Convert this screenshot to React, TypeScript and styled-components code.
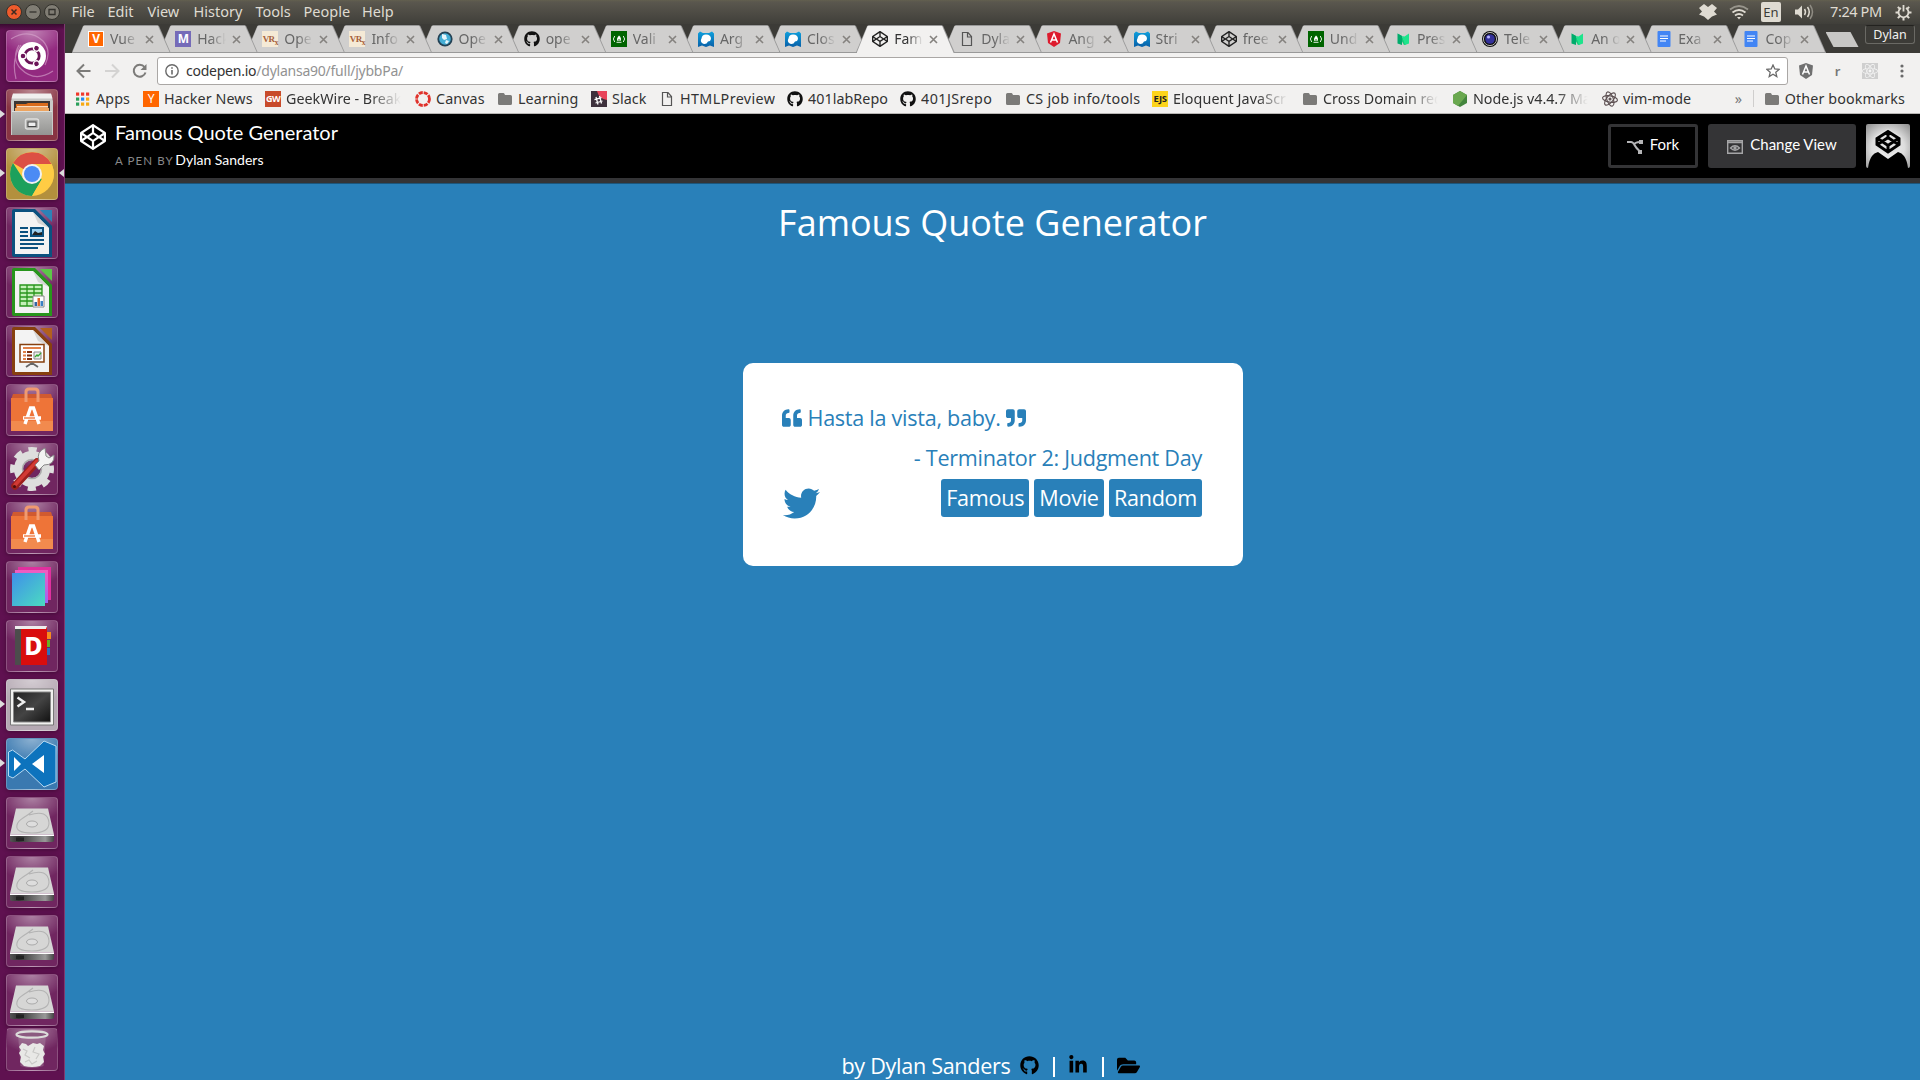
import React from "react";
import styled, { createGlobalStyle } from "styled-components";
import {
  FaCodepen, FaFolderOpen, FaGithub, FaLinkedinIn, FaQuoteLeft, FaQuoteRight, FaReact, FaTwitter,
} from "react-icons/fa";

const GlobalStyle = createGlobalStyle`
  * { box-sizing: border-box; }
  body { margin: 0; overflow: hidden; }
  svg { display: block; flex: none; }
`;

const ui = `"Noto Sans", "Open Sans", sans-serif`;
const blue = "#2980b9";

const Screen = styled.div`
  width: 1920px;
  height: 1080px;
  display: flex;
  flex-direction: column;
  overflow: hidden;
  font-family: ${ui};
`;

/* ---------- desktop panel ---------- */
const Panel = styled.header`
  height: 24px;
  flex: none;
  display: flex;
  align-items: center;
  background: linear-gradient(#63604f 0, #5a574e 2px, #403f3a 100%);
  color: #dfdbd2;
  font-size: 14.5px;
  line-height: 22px;
`;
const WindowButtons = styled.div`
  display: flex;
  gap: 3px;
  width: 71.5px;
  padding: 0 0 1px 6px;
`;
const MenuItem = styled.span<{ $w: number }>`
  width: ${(p) => p.$w}px;
  margin-top: -2px;
  white-space: nowrap;
`;
const Tray = styled.div`
  margin-left: auto;
  display: flex;
  align-items: center;
  padding-right: 8px;
`;
const WifiIcon = styled.svg`
  margin-left: 12px;
`;
const Language = styled.span`
  width: 20px;
  height: 20px;
  margin: 0 13px 0 12px;
  border-radius: 2px;
  background: #dfdbd2;
  color: #3c3b37;
  font-size: 13px;
  line-height: 20px;
  text-align: center;
`;
const Clock = styled.span`
  width: 54px;
  margin: -2px 11px 0 16px;
  white-space: nowrap;
  letter-spacing: -0.4px;
`;

const Workspace = styled.div`
  flex: 1;
  display: flex;
  min-height: 0;
`;

/* ---------- launcher ---------- */
const Launcher = styled.nav`
  width: 65px;
  flex: none;
  padding: 6px 0 0 6px;
  display: flex;
  flex-direction: column;
  gap: 7px;
  background: linear-gradient(#390a30 0, #5f1150 6px, #5f1150 100%);
  border-right: 1px solid #7e3a70;
`;
const Tile = styled.div<{ $bg?: string; $short?: boolean }>`
  position: relative;
  flex: none;
  width: 52px;
  height: ${(p) => (p.$short ? 43 : 52)}px;
  margin-top: ${(p) => (p.$short ? -5 : 0)}px;
  border-radius: 4px;
  border: 1px solid rgba(255, 255, 255, 0.2);
  background: radial-gradient(ellipse 34px 24px at 50% 0, rgba(255, 255, 255, 0.42), rgba(255, 255, 255, 0) 100%),
    ${(p) => p.$bg ?? "#702660"};
  box-shadow: 0 1px 4px rgba(30, 0, 25, 0.45);
  display: flex;
  align-items: center;
  justify-content: center;
  ${(p) => p.$short && "clip-path: polygon(2% 0, 98% 0, 102% 100%, -2% 100%);"}
`;
const Pip = styled.i<{ $right?: boolean }>`
  position: absolute;
  top: 20px;
  ${(p) => (p.$right ? "right: -7px; border-right: 5px solid #ddd;" : "left: -7px; border-left: 5px solid #ddd;")}
  border-top: 4.5px solid transparent;
  border-bottom: 4.5px solid transparent;
`;

/* ---------- browser ---------- */
const Browser = styled.main`
  flex: 1;
  min-width: 0;
  display: flex;
  flex-direction: column;
`;
const TabStrip = styled.div`
  height: 29px;
  flex: none;
  display: flex;
  align-items: flex-start;
  padding: 1px 0 0 6.5px;
  background: #3c3b37;
`;
const TabBox = styled.div<{ $active?: boolean; $z: number }>`
  position: relative;
  z-index: ${(p) => (p.$active ? 50 : p.$z)};
  isolation: isolate;
  width: 99.3px;
  height: 28px;
  flex: none;
  margin-right: -12.18px;
  padding-left: 16.5px;
  display: flex;
  align-items: center;
  &::before,
  &::after {
    content: "";
    position: absolute;
    inset: 0;
    z-index: -2;
    background: #999;
    clip-path: polygon(0 100%, 11.5px 1px, 13px 0, 86px 0, 87.5px 1px, 100% 100%);
  }
  &::after {
    z-index: -1;
    inset: 1px 1.3px ${(p) => (p.$active ? 0 : 1)}px 1px;
    background: ${(p) => (p.$active ? "#f2f1f0" : "#d0cfce")};
    clip-path: polygon(0 100%, 11px 0, 85.5px 0, 100% 100%);
  }
`;
const TabTitle = styled.span<{ $active?: boolean }>`
  width: 29px;
  margin-left: 6px;
  overflow: hidden;
  white-space: nowrap;
  font-size: 14px;
  line-height: 20px;
  margin-top: -1px;
  color: ${(p) => (p.$active ? "#333" : "#666")};
  mask-image: linear-gradient(90deg, #000 45%, transparent 100%);
`;
const TabClose = styled.svg`
  margin-left: 6px;
  stroke: #85827f;
  stroke-width: 1.6;
`;
const NewTab = styled.i`
  width: 33px;
  height: 15px;
  margin: 7px 0 0 11.5px;
  background: #c8c7c5;
  clip-path: polygon(0 0, 25px 0, 33px 100%, 8px 100%);
`;
const Profile = styled.span`
  width: 50px;
  height: 19px;
  margin: 0 5px 0 auto;
  border: 1px solid #6a6964;
  border-top-color: #23221f;
  border-radius: 3px;
  background: #3c3b37;
  color: #f2f1f0;
  font-size: 12.5px;
  line-height: 17px;
  text-align: center;
`;
const Toolbar = styled.div`
  height: 34px;
  flex: none;
  display: flex;
  align-items: center;
  padding: 2px 0 0 10.5px;
  background: #f2f1f0;
`;
const NavIcon = styled.svg<{ $dim?: boolean; $gap?: number }>`
  margin-right: ${(p) => p.$gap ?? 12}px;
  fill: none;
  stroke: ${(p) => (p.$dim ? "#d4d3d2" : "#7c7b79")};
  stroke-width: 2;
`;
const Omnibox = styled.div`
  flex: none;
  width: 1631px;
  height: 28px;
  margin-right: 10px;
  padding: 0 7px;
  display: flex;
  align-items: center;
  border: 1px solid #aaa7a5;
  border-radius: 3px;
  background: #fff;
  color: #333;
  font-size: 14px;
  span { color: #929292; }
`;
const Url = styled.div`
  flex: 1;
  margin: -1px 0 0 7.5px;
  letter-spacing: -0.24px;
`;
const ExtensionIcon = styled.div<{ $w: number; $pad?: number }>`
  flex: none;
  width: ${(p) => p.$w}px;
  padding-left: ${(p) => p.$pad ?? 0}px;
  display: flex;
  justify-content: center;
  color: #777;
  font: 600 13px ${ui};
`;
const Bookmarks = styled.div`
  height: 27px;
  flex: none;
  display: flex;
  align-items: center;
  padding: 0 15px 3px 10px;
  background: #f2f1f0;
  border-bottom: 1px solid #b8b6b4;
  color: #333;
  font-size: 14.3px;
  line-height: 20px;
`;
const Bookmark = styled.span<{ $w?: number }>`
  flex: none;
  width: ${(p) => (p.$w ? p.$w + "px" : "auto")};
  display: flex;
  align-items: center;
  gap: 5px;
`;
const BookmarkText = styled.span<{ $fade?: boolean; $ls?: number }>`
  white-space: nowrap;
  overflow: hidden;
  letter-spacing: ${(p) => p.$ls ?? 0}px;
  ${(p) => p.$fade && "width: 116px; mask-image: linear-gradient(90deg, #000 72%, transparent 99%);"}
`;
const Chevron = styled.span`
  margin-left: auto;
  width: 18px;
  color: #777;
`;
const Divider = styled.i`
  width: 1px;
  height: 17px;
  margin-right: 10px;
  background: #cfcecd;
`;
const Favicon = styled.b<{ $bg: string; $c?: string; $size?: number; $weight?: number; $font?: string; $rim?: boolean }>`
  width: 16px;
  height: 16px;
  flex: none;
  background: ${(p) => p.$bg};
  color: ${(p) => p.$c ?? "#fff"};
  font: ${(p) => p.$weight ?? 700} ${(p) => p.$size ?? 12}px/${(p) => (p.$rim ? 13 : 16)}px ${(p) => p.$font ?? ui};
  letter-spacing: -0.5px;
  text-align: center;
  ${(p) => p.$rim && "border: 1px solid #fff;"}
`;

/* ---------- pen page ---------- */
const PenHeader = styled.div`
  height: 69px;
  flex: none;
  display: flex;
  align-items: flex-start;
  padding: 10px 10px 0 14.5px;
  background: #000;
  border-bottom: 5px solid #343436;
  color: #fff;
  font-family: Lato, sans-serif;
`;
const PenLogo = styled(FaCodepen)`
  margin-top: -0.5px;
`;
const PenTitle = styled.div`
  margin: -4px auto 0 9.5px;
  font-size: 20px;
  line-height: 24px;
`;
const Byline = styled.div`
  margin-top: 6px;
  font-size: 14px;
  line-height: 20px;
  small {
    margin-right: -2px;
    color: #88888a;
    font-size: 11.5px;
    letter-spacing: 1.1px;
  }
`;
const PenButton = styled.div<{ $filled?: boolean; $w: number }>`
  width: ${(p) => p.$w}px;
  height: 44px;
  margin-right: 10px;
  padding-bottom: 4px;
  display: flex;
  align-items: center;
  justify-content: center;
  gap: 7px;
  border: 3px solid #343436;
  border-radius: 3px;
  background: ${(p) => (p.$filled ? "#343436" : "#000")};
  font-size: 15px;
  svg { margin-top: 6px; }
`;
const Page = styled.section`
  flex: 1;
  display: flex;
  flex-direction: column;
  align-items: center;
  background: ${blue};
  color: #fff;
  font-family: "Open Sans", "Noto Sans", sans-serif;
  border-top: 1px solid #1d567b;
`;
const Heading = styled.h1`
  margin: 14px 0 0;
  font-size: 36px;
  line-height: 50px;
  font-weight: 400;
`;
const Card = styled.article`
  width: 500px;
  height: 203px;
  margin-top: 115px;
  padding: 35px 40.5px 0 39.5px;
  border-radius: 10px;
  background: #fff;
  color: ${blue};
  font-size: 21.6px;
  letter-spacing: -0.28px;
  line-height: 40px;
`;
const Quote = styled.div`
  display: flex;
  align-items: center;
  gap: 5.5px;
  svg { margin-top: -1px; }
`;
const Author = styled.div`
  text-align: right;
`;
const CardFooter = styled.div`
  display: flex;
  align-items: flex-start;
  justify-content: space-between;
`;
const Bird = styled(FaTwitter)`
  margin: 7px 0 0 1px;
`;
const Tags = styled.div`
  display: flex;
  gap: 5.2px;
  padding-top: 1px;
`;
const Tag = styled.span`
  height: 38px;
  padding: 0 5px;
  border-radius: 3px;
  background: ${blue};
  color: #fff;
  line-height: 37px;
`;
const Footer = styled.footer`
  margin: auto 4px 0 0;
  display: flex;
  align-items: center;
  height: 30px;
  font-size: 21.6px;
  letter-spacing: -0.3px;
  color: #fff;
  svg { color: #000; }
`;
const FooterGithub = styled(FaGithub)`
  margin-left: 9px;
`;
const Pipe = styled.span<{ $l: number; $r: number }>`
  width: 2px;
  height: 20px;
  margin: 3px ${(p) => p.$r}px 0 ${(p) => p.$l}px;
  background: #fff;
`;

/* ---------- favicons ---------- */
const Folder = () => (
  <svg width="16" height="16" viewBox="0 0 16 16"><path d="M1 3.500q0-1.500 1.500-1.500h4q.8 0 1.500 2h5.500q1.500 0 1.500 1.500v7q0 1.500-1.500 1.500h-11q-1.500 0-1.500-1.500z" fill="#7b7a78" /></svg>
);
const Doc = () => (
  <svg width="16" height="16" viewBox="0 0 16 16"><path d="M3.500 1.500h5.500l3.500 4v9h-9zM8.500 1.500v4.500h4" fill="none" stroke="#555" strokeWidth="1.200" /></svg>
);
const AppsGrid = () => (
  <svg width="16" height="16" viewBox="0 0 16 16">
    {["#f0392b", "#f0392b", "#f0392b", "#2b9f5a", "#2589f0", "#f7a911", "#2b9f5a", "#f7a911", "#f7a911"].map((c, i) => (
      <rect key={i} x={1 + (i % 3) * 5} y={1.500 + Math.floor(i / 3) * 5} width="3.200" height="3.200" fill={c} />
    ))}
  </svg>
);
const CanvasRing = () => (
  <svg width="16" height="16" viewBox="0 0 16 16"><circle cx="8" cy="8" r="6.500" fill="none" stroke="#e0322b" strokeWidth="2.800" strokeDasharray="4.100 1" /></svg>
);
const SlackMark = () => (
  <svg width="16" height="16" viewBox="0 0 16 16">
    <rect width="16" height="16" fill="#3e313c" /><path d="M6 0h10v9Q8 8 6 0" fill="#e9445a" />
    <path d="M5 6l2 7.500M8.500 5l2 7.500M3.500 8.700l7-2M4.500 12l7-2" stroke="#fff" strokeWidth="1.300" />
  </svg>
);
const NodeHex = () => (
  <svg width="16" height="16" viewBox="0 0 16 16"><path d="M8 0l7 4v8l-7 4-7-4V4z" fill="#43853d" /><path d="M8 0l7 4-9 11-5-3V4z" fill="#6aa84f" /></svg>
);
const AtomMark = () => (
  <svg width="16" height="16" viewBox="0 0 16 16" fill="none" stroke="#5d5052" strokeWidth="1.100">
    {[10, 70, 130].map((a) => <ellipse key={a} cx="8" cy="8" rx="7.500" ry="3.200" transform={`rotate(${a} 8 8)`} />)}
    <circle cx="8" cy="8" r="1" fill="#5d5052" />
  </svg>
);
const Globe = () => (
  <svg width="16" height="16" viewBox="0 0 16 16">
    <circle cx="8" cy="8" r="7.600" fill="#234154" /><circle cx="8" cy="8" r="5.800" fill="#45aed5" />
    <path d="M5 3l4 1 1 4-3 1-2-2zM9 9l3 1-2 3-2-1z" fill="#e7f5fa" />
  </svg>
);
const Camp = () => (
  <svg width="16" height="16" viewBox="0 0 16 16">
    <rect width="16" height="16" fill="#006400" />
    <path d="M3.700 5q-2.600 3 0 6M12.300 5q2.600 3 0 6M5.500 11.300h5" fill="none" stroke="#fff" strokeWidth=".9" />
    <path d="M8 4.500q3 2.500 1.500 5.500h-3Q5 7.500 8 4.500" fill="#fff" /><path d="M8 8v2" stroke="#006400" strokeWidth=".9" />
  </svg>
);
const Cloud9 = () => (
  <svg width="16" height="16" viewBox="0 0 16 16">
    <defs><linearGradient id="c9" x2="0" y2="1"><stop stopColor="#0fa0dd" /><stop offset="1" stopColor="#0860a8" /></linearGradient></defs>
    <path d="M0 2.500L2 .5 5 2h6l3-1.500 2 2V16l-4-1.500L8 16l-4-1.500L0 16z" fill="url(#c9)" />
    <path d="M4 12q-2-2-.5-4.500Q4 3.500 8 3.500q5 0 5 4.500-.5 2.500-3 2.500l-1.500 2Q6 13.500 4 12" fill="#fff" />
  </svg>
);
const Shield = ({ gray }: { gray?: boolean }) => (
  <svg width="16" height="16" viewBox="0 0 16 16">
    <path d="M8 0l7 2.500-1 9.500-6 4-6-4-1-9.500z" fill={gray ? "#707070" : "#dd1b2d"} />
    <path d="M4.500 11.500L8 3l3.500 8.500M6 9h4" fill="none" stroke="#fff" strokeWidth="1.500" />
  </svg>
);
const Medium = () => (
  <svg width="16" height="16" viewBox="0 0 16 16">
    <path d="M2.500 2.500L7 5l4 8.500-2 .5z" fill="#12c977" /><path d="M2.500 2.500L7 5v9l-4.500-1.500z" fill="#00ab6b" />
    <path d="M9.500 5.500L14 2.500v10L10 14 7 5z" fill="#1ee48c" />
  </svg>
);
const Lens = () => (
  <svg width="16" height="16" viewBox="0 0 16 16">
    <circle cx="8" cy="8" r="8" fill="#111" /><circle cx="8" cy="8" r="6.600" fill="none" stroke="#ddd" strokeWidth=".8" />
    <circle cx="8" cy="8" r="4.800" fill="#33309a" /><circle cx="6.500" cy="6" r="1.600" fill="#b4b2ff" />
  </svg>
);
const GDoc = () => (
  <svg width="16" height="16" viewBox="0 0 16 16"><rect x="1.500" width="13" height="16" rx="1" fill="#4285f4" /><path d="M4 5h8M4 7.500h8M4 10h6" stroke="#fff" strokeWidth="1.100" /></svg>
);
const Vr = () => <Favicon $bg="#f5ead6" $c="#a5603c" $size={9} $weight={700} $font={`"Liberation Serif", serif`}>VR<sub>x</sub></Favicon>;

/* ---------- launcher icons ---------- */
const UbuntuLogo = () => (
  <svg width="50" height="50" viewBox="0 0 50 50">
    <path d="M4 8Q22-3 36 10q9 10 2 24M46 40Q28 52 14 38 4 28 12 14M9 48Q4 28 14 14" fill="none" stroke="#d9a8cf" strokeOpacity=".6" strokeWidth="1.200" />
    <circle cx="25" cy="25" r="14" fill="#fff" />
    <circle cx="25" cy="25" r="7.200" fill="none" stroke="#6b1458" strokeWidth="2.800" />
    {[60, 180, 300].map((a) => (
      <g key={a} transform={`rotate(${a} 25 25)`}><circle cx="34" cy="25" r="2.900" fill="#6b1458" stroke="#fff" strokeWidth="1.200" /></g>
    ))}
  </svg>
);
const Files = () => (
  <svg width="50" height="50" viewBox="0 0 50 50">
    <defs><linearGradient id="cab" x2="0" y2="1"><stop stopColor="#bdbdbb" /><stop offset="1" stopColor="#949492" /></linearGradient></defs>
    <path d="M6 4h38l2 7v34H4V11z" fill="#c9c9c7" /><path d="M6 3.500h38l1.500 5h-41z" fill="#f0f0ef" /><path d="M7 11h36v11H7z" fill="#3b3533" />
    <path d="M9 14h10l2-1h20v9H9z" fill="#d96b1c" /><path d="M10 16h31v1.500H10z" fill="#f8dcbe" /><path d="M8 18h34v4H8z" fill="#eda45f" />
    <path d="M5 21h40v24H5z" fill="url(#cab)" /><path d="M5 21h40v1H5z" fill="#dcdcda" />
    <rect x="18.500" y="29" width="13" height="10" rx="2" fill="#a8a8a6" stroke="#dededd" strokeWidth="1.500" />
    <rect x="21" y="32" width="8" height="4.500" fill="#eee" stroke="#444" />
  </svg>
);
const Chrome = () => (
  <svg width="50" height="50" viewBox="0 0 50 50">
    <circle cx="25" cy="25" r="22" fill="#fc4" />
    <path d="M25 25L6 14A22 22 0 0 1 44.500 15H25z" fill="#dc5044" />
    <path d="M25 25l10 5L25 47A22 22 0 0 1 6 14l11 17z" fill="#1ca05c" />
    <path d="M25 15h19.500q3.500 8 1.500 16T25 47l10-17z" fill="#fc4" />
    <circle cx="25" cy="25" r="10" fill="#f1f1f1" /><circle cx="25" cy="25" r="8" fill="#4b8bf4" />
  </svg>
);
const Office = ({ color, light, kind }: { color: string; light: string; kind: "writer" | "calc" | "impress" }) => (
  <svg width="50" height="50" viewBox="0 0 50 50">
    <path d="M7 1h21l17 17v31H7q-2 0-2-2V3q0-2 2-2z" fill={color} /><path d="M33 2h12v12z" fill={light} />
    <path d="M8 4h18l16 16v26H8z" fill="#f3f3f3" /><path d="M26 4l16 16-11-5z" fill="#d5d5d5" />
    {kind === "writer" && <g fill={color}><path d="M13 19h8v2h-8zM13 23h8v2h-8zM13 27h8v2h-8zM13 31h24v2H13zM13 35h24v2H13zM13 39h18v2H13z" /><path d="M23 19h14v10H23z" /><path d="M25 21h10v6H25z" fill="#9cd0f0" /><path d="M25 27l3-4 3 2 4-1v3z" fill="#222" /></g>}
    {kind === "calc" && <g><path d="M13 18h22v21H13z" fill="#c4f0b8" /><path d="M13 18h22v21H13zM13 22h22M13 26h22M13 30h22M13 34h22M20 18v21M27 18v21" fill="none" stroke="#28951c" strokeWidth="1.300" /><path d="M26 29h11v11H26z" fill="#fff" stroke="#888" /><path d="M27.500 35h2.500v4h-2.500z" fill="#3465a4" /><path d="M30.500 31h2.500v8h-2.500z" fill="#e0682c" /><path d="M33.500 34h2.500v5h-2.500z" fill="#3b80c4" /></g>}
    {kind === "impress" && <g><path d="M13 18.500h24v17.500H13z" fill="#fff" stroke={color} strokeWidth="1.500" /><path d="M16 21h18v2H16z" fill="#e08048" /><path d="M16 25h3v2h-3zM16 28.500h3v2h-3zM16 32h3v2h-3z" fill="#e08048" /><path d="M20 25h5v2h-5zM20 28.500h5v2h-5zM20 32h5v2h-5z" fill="#803010" /><path d="M27 26h7v7h-7z" fill="#eee" stroke="#888" /><path d="M28 31l2-2 1 1 3-3" fill="none" stroke="#3a3" strokeWidth="1.300" /><path d="M25 37v2M25 37l-6 4M25 37l6 4" stroke="#666" strokeWidth="1.800" /></g>}
  </svg>
);
const Software = () => (
  <svg width="50" height="50" viewBox="0 0 50 50">
    <path d="M6 9h38l2 6H4z" fill="#d05a30" /><path d="M4 13h42v33H4z" fill="#ee7438" /><path d="M4 36h42v10H4z" fill="#f28a4e" />
    <path d="M19 17V7q0-3 3-3h6q3 0 3 3v10" fill="none" stroke="#f09a70" strokeWidth="3" />
    <path d="M18 39l5.500-16h3L32 39M16 33h18" fill="none" stroke="#fff" strokeWidth="3.400" /><path d="M17 33h11" stroke="#ee6f30" strokeWidth="1.300" />
  </svg>
);
const Settings = () => (
  <svg width="50" height="50" viewBox="0 0 50 50">
    <circle cx="25" cy="25" r="19.500" fill="none" stroke="#dededd" strokeWidth="5" strokeDasharray="8.300 7.010" strokeDashoffset="4.150" />
    <circle cx="25" cy="25" r="13.500" fill="none" stroke="#dededd" strokeWidth="9" /><circle cx="25" cy="25" r="9.500" fill="none" stroke="#aaa" strokeWidth="1.500" />
    <path d="M8 42L30 18" stroke="#9c201c" strokeWidth="7.500" strokeLinecap="round" /><path d="M8 41L30 17" stroke="#d23a34" strokeWidth="3.500" strokeLinecap="round" />
    <path d="M28 21l4-4q-3-9 6-13l1 8 3 2 5-3q1 10-10 10l-5 5z" fill="#f3f3f2" stroke="#888" strokeWidth="1" />
    <circle cx="7.500" cy="42.500" r="1.500" fill="#4b0d0a" />
  </svg>
);
const Layers = () => (
  <svg width="50" height="50" viewBox="0 0 50 50">
    <defs><linearGradient id="lay" x2="1" y2="1"><stop stopColor="#3f8fea" /><stop offset="1" stopColor="#4bdcc0" /></linearGradient><linearGradient id="lay2" x2="0" y2="1"><stop stopColor="#f25cbf" /><stop offset="1" stopColor="#9a68f4" /></linearGradient></defs>
    <path d="M11 5h33v33H11z" fill="#e0309f" /><path d="M8 8h33v33H8z" fill="url(#lay2)" /><path d="M5 11h33v33H5z" fill="url(#lay)" />
  </svg>
);
const Dash = () => (
  <svg width="50" height="50" viewBox="0 0 50 50">
    <path d="M37 11h7v7h-7z" fill="#f78b1e" /><path d="M37 19h6v7h-6z" fill="#69b320" /><path d="M37 27h6v7h-6z" fill="#2b70bd" />
    <path d="M8 6h32v38H8z" fill="#d90d0d" /><path d="M8 6h6v38H8z" fill="#4c4c4c" /><path d="M8 5h32l-1 3H8z" fill="#eee" />
    <text x="26.500" y="34" textAnchor="middle" fontFamily="Noto Sans, sans-serif" fontWeight="800" fontSize="25" fill="#fff">D</text>
  </svg>
);
const Terminal = () => (
  <svg width="50" height="50" viewBox="0 0 50 50">
    <defs><linearGradient id="term" x2="1" y2="1"><stop stopColor="#222" /><stop offset=".5" stopColor="#444" /><stop offset="1" stopColor="#111" /></linearGradient></defs>
    <path d="M3.500 9h43v36h-43z" fill="#f1f1ef" stroke="#777" /><path d="M6.500 12h37v30h-37z" fill="url(#term)" stroke="#888" />
    <path d="M10.500 17.500l6.500 4.500-6.500 4.500M19 29h8" fill="none" stroke="#eee" strokeWidth="2.500" />
  </svg>
);
const Code = () => (
  <svg width="50" height="50" viewBox="0 0 50 50">
    <path d="M1.500 13l4-2L18 20 37 2l12 5v36l-12 5L18 30 6 39l-4.500-2z" fill="#0d73bd" stroke="#b7daf2" strokeWidth="1" />
    <path d="M7 18v14l7-7zM37 16v18L25 25z" fill="#fff" />
  </svg>
);
const Disk = () => (
  <svg width="50" height="50" viewBox="0 0 50 50">
    <defs><linearGradient id="dk" x2="1" y2="0"><stop stopColor="#555" /><stop offset=".2" stopColor="#333" /><stop offset=".8" stopColor="#999" /><stop offset="1" stopColor="#444" /></linearGradient></defs>
    <path d="M9 10.500h32l6 26H3z" fill="#d6d6d5" /><path d="M3 37h44v5.500q0 1-2 1.500H5q-2-.5-2-1.500z" fill="url(#dk)" /><path d="M3 36.500h44V38H3z" fill="#fff" /><path d="M9 39.500h8v3.500H9z" fill="#222" />
    <path d="M22 17q19-6 20 8 0 10-17 10T10 27q1-4 6-7t10-7" fill="none" stroke="#b3b3b3" strokeWidth="1.100" />
    <ellipse cx="25" cy="26" rx="5.500" ry="3" fill="#ddd" stroke="#aaa" />
  </svg>
);
const Trash = () => (
  <svg width="50" height="42" viewBox="0 0 50 42">
    <path d="M11 5l2.500 32q11.500 4 23 0L39 5z" fill="#a984a0" fillOpacity=".45" />
    <path d="M12 18l3-4 4 1 2 2 5-3 4 1 3-1 4 3-1 4 2 4-2 3 1 5-4 4q-8 2-16 0l-4-4 1-5-2-4 2-3z" fill="#e8e8e6" />
    <path d="M16 20l4 2-2 4 5 3M28 18l-2 5 6 2-3 5M18 33l4-2 3 4 5-3" fill="none" stroke="#c9c9c7" strokeWidth="1.200" />
    <ellipse cx="25" cy="5.500" rx="15.500" ry="3.200" fill="#8b5a80" stroke="#dcdcda" strokeWidth="2.200" />
  </svg>
);

const launcher: { icon: React.ReactNode; bg?: string; left?: boolean; right?: boolean; short?: boolean }[] = [
  { icon: <UbuntuLogo />, bg: "#932a80" },
  { icon: <Files />, bg: "#883443", left: true },
  { icon: <Chrome />, bg: "#b3903d", left: true, right: true },
  { icon: <Office color="#0b517f" light="#2d82b7" kind="writer" /> },
  { icon: <Office color="#28951c" light="#5cc848" kind="calc" /> },
  { icon: <Office color="#87400f" light="#b2601e" kind="impress" /> },
  { icon: <Software /> },
  { icon: <Settings /> },
  { icon: <Software /> },
  { icon: <Layers /> },
  { icon: <Dash /> },
  { icon: <Terminal />, bg: "#b5a9b3", left: true },
  { icon: <Code />, bg: "#3a79b0", left: true },
  { icon: <Disk /> }, { icon: <Disk /> }, { icon: <Disk /> }, { icon: <Disk /> },
  { icon: <Trash />, short: true },
];

const tabs: [React.ReactNode, string][] = [
  [<Favicon $bg="#ff6600" $rim>V</Favicon>, "Vue"],
  [<Favicon $bg="#756bb8">M</Favicon>, "Hack"],
  [<Vr />, "Ope"], [<Vr />, "Info"], [<Globe />, "Ope"],
  [<FaGithub size={16} color="#111" />, "ope"], [<Camp />, "Vali"],
  [<Cloud9 />, "Arg"], [<Cloud9 />, "Clos"], [<FaCodepen size={16} color="#222" />, "Fam"],
  [<Doc />, "Dyla"], [<Shield />, "Ang"], [<Cloud9 />, "Stri"],
  [<FaCodepen size={16} color="#222" />, "free"], [<Camp />, "Und"],
  [<Medium />, "Pres"], [<Lens />, "Tele"], [<Medium />, "An o"], [<GDoc />, "Exa"], [<GDoc />, "Cop"],
];

const bookmarks: { icon: React.ReactNode; text: string; w: number; fade?: boolean; ls?: number }[] = [
  { icon: <AppsGrid />, text: "Apps", w: 68, ls: 0.1 },
  { icon: <Favicon $bg="#ff6600" $weight={400}>Y</Favicon>, text: "Hacker News", w: 122, ls: 0.1 },
  { icon: <Favicon $bg="#c84b2b" $size={9}>GW</Favicon>, text: "GeekWire - Break", w: 150, fade: true, ls: 0 },
  { icon: <CanvasRing />, text: "Canvas", w: 82, ls: 0.1 },
  { icon: <Folder />, text: "Learning", w: 94, ls: 0.1 },
  { icon: <SlackMark />, text: "Slack", w: 68, ls: 0.1 },
  { icon: <Doc />, text: "HTMLPreview", w: 128, ls: 0.4 },
  { icon: <FaGithub size={16} color="#111" />, text: "401labRepo", w: 113, ls: 0.05 },
  { icon: <FaGithub size={16} color="#111" />, text: "401JSrepo", w: 105, ls: 0.45 },
  { icon: <Folder />, text: "CS job info/tools", w: 147, ls: 0.27 },
  { icon: <Favicon $bg="#fdd41b" $c="#222" $size={9.5}>EJS</Favicon>, text: "Eloquent JavaScr", w: 150, fade: true, ls: 0.1 },
  { icon: <Folder />, text: "Cross Domain req", w: 150, fade: true },
  { icon: <NodeHex />, text: "Node.js v4.4.7 Ma", w: 150, fade: true, ls: -0.05 },
  { icon: <AtomMark />, text: "vim-mode", w: 100, ls: 0.05 },
];

const menus: [string, number][] = [["File", 36], ["Edit", 40], ["View", 46], ["History", 62], ["Tools", 48], ["People", 58.5], ["Help", 40]];

export default function App() {
  return (
    <Screen>
      <GlobalStyle />
      <Panel>
        <WindowButtons>
          <svg width="16" height="16" viewBox="0 0 16 16"><circle cx="8" cy="8" r="7.500" fill="#ee5b2c" stroke="#33322d" /><path d="M5.500 5.500l5 5M10.500 5.500l-5 5" stroke="#3c2a22" strokeWidth="1.500" /></svg>
          <svg width="16" height="16" viewBox="0 0 16 16"><circle cx="8" cy="8" r="7.500" fill="#807d74" stroke="#33322d" /><path d="M4.500 8h7" stroke="#33322d" strokeWidth="1.300" /></svg>
          <svg width="16" height="16" viewBox="0 0 16 16"><circle cx="8" cy="8" r="7.500" fill="#807d74" stroke="#33322d" /><path d="M5 5.500h6v5H5z" fill="none" stroke="#33322d" strokeWidth="1.300" /></svg>
        </WindowButtons>
        {menus.map(([m, w]) => <MenuItem key={m} $w={w}>{m}</MenuItem>)}
        <Tray>
          <svg width="18" height="16" viewBox="0 0 18 16" fill="#dfdbd2"><path d="M5 0l4 3 4-3 5 4-3 3.500 3 3-5 2-4 3.500-4-3.500-5-2 3-3L0 4z" /></svg>
          <WifiIcon width="20" height="18" viewBox="0 0 20 18" fill="none" stroke="#dfdbd2" strokeWidth="1.800"><path d="M1 6.500q9-7 18 0" stroke="#98958c" /><path d="M3.500 9.500q6.500-5 13 0M6 12.500q4-3 8 0" /><path d="M8 14l2 2.500 2-2.500z" fill="#dfdbd2" stroke="none" /></WifiIcon>
          <Language>En</Language>
          <svg width="20" height="16" viewBox="0 0 20 16" fill="none" stroke="#dfdbd2" strokeWidth="1.500"><path d="M1 5.500h3l4-4v13l-4-4H1z" fill="#dfdbd2" stroke="none" /><path d="M10.500 5q2 3 0 6M13.500 3q3.500 5 0 10" /><path d="M16 1q5 7 0 14" stroke="#8f8c83" /></svg>
          <Clock>7:24 PM</Clock>
          <svg width="17" height="17" viewBox="0 0 17 17" fill="none" stroke="#dfdbd2">
            <path d="M6 4a5 5 0 1 0 5 0" strokeWidth="1.800" /><path d="M8.500 1v6.500" strokeWidth="1.800" />
            {[0, 45, 90, 135, 180, 225, 315].filter((a) => a !== 270).map((a) => (
              <path key={a} d="M13.500 8.500h3" strokeWidth="2" transform={`rotate(${a} 8.500 8.500)`} />
            ))}
          </svg>
        </Tray>
      </Panel>
      <Workspace>
        <Launcher>
          {launcher.map((l, i) => (
            <Tile key={i} $bg={l.bg} $short={l.short}>
              {l.icon}
              {l.left && <Pip />}
              {l.right && <Pip $right />}
            </Tile>
          ))}
        </Launcher>
        <Browser>
          <TabStrip>
            {tabs.map(([icon, title], i) => (
              <TabBox key={i} $active={i === 9} $z={40 - i}>
                {icon}
                <TabTitle $active={i === 9}>{title}</TabTitle>
                <TabClose width="9" height="9" viewBox="0 0 9 9"><path d="M1 1l7 7M8 1l-7 7" /></TabClose>
              </TabBox>
            ))}
            <NewTab />
            <Profile>Dylan</Profile>
          </TabStrip>
          <Toolbar>
            <NavIcon width="16" height="16" viewBox="0 0 16 16"><path d="M14.500 8H2M8 1.500L1.500 8 8 14.500" /></NavIcon>
            <NavIcon $dim width="16" height="16" viewBox="0 0 16 16"><path d="M1 8h13M8 1.500L14.500 8 8 14.500" /></NavIcon>
            <NavIcon $gap={9} width="16" height="16" viewBox="0 0 16 16"><path d="M12.500 4A6 6 0 1 0 13.500 9.500" /><path d="M14.500 1v6h-6z" fill="#7c7b79" stroke="none" /></NavIcon>
            <Omnibox>
              <svg width="14" height="14" viewBox="0 0 14 14"><circle cx="7" cy="7" r="6.200" fill="none" stroke="#6a6a6a" strokeWidth="1.400" /><path d="M7 6v4.500M7 3.300v1.500" stroke="#6a6a6a" strokeWidth="1.600" /></svg>
              <Url>codepen.io<span>/dylansa90/full/jybbPa/</span></Url>
              <svg width="14" height="14" viewBox="0 0 14 14"><path d="M7 1l1.800 4 4.300.4-3.300 2.900 1 4.300L7 10.300l-3.800 2.300 1-4.300L.9 5.400 5.200 5z" fill="none" stroke="#6a6a6a" strokeWidth="1.300" /></svg>
            </Omnibox>
            <ExtensionIcon $w={16}><Shield gray /></ExtensionIcon>
            <ExtensionIcon $w={48}>r</ExtensionIcon>
            <ExtensionIcon $w={16}><Favicon as="div" $bg="#cfcfcf"><FaReact size={16} color="#f6f6f6" /></Favicon></ExtensionIcon>
            <ExtensionIcon $w={42} $pad={7}><svg width="4" height="14" viewBox="0 0 4 14" fill="#6a6a6a"><circle cx="2" cy="2" r="1.600" /><circle cx="2" cy="7" r="1.600" /><circle cx="2" cy="12" r="1.600" /></svg></ExtensionIcon>
          </Toolbar>
          <Bookmarks>
            {bookmarks.map((b) => (
              <Bookmark key={b.text} $w={b.w}>{b.icon}<BookmarkText $fade={b.fade} $ls={b.ls}>{b.text}</BookmarkText></Bookmark>
            ))}
            <Chevron>»</Chevron>
            <Divider />
            <Bookmark><Folder /><BookmarkText $ls={0.13}>Other bookmarks</BookmarkText></Bookmark>
          </Bookmarks>
          <PenHeader>
            <PenLogo size={26} />
            <PenTitle>
              Famous Quote Generator
              <Byline><small>A PEN BY</small> Dylan Sanders</Byline>
            </PenTitle>
            <PenButton $w={90}>
              <svg width="16" height="14" viewBox="0 0 16 14" fill="none" stroke="#b5b5b7" strokeWidth="2"><path d="M0 2h4q2 0 3.500 3T13 11.500M7 5q1-3 6-3" /><path d="M12 0h4v4h-4zM11 10h4v4h-4z" fill="#b5b5b7" stroke="none" /></svg>
              Fork
            </PenButton>
            <PenButton $filled $w={148}>
              <svg width="16" height="14" viewBox="0 0 16 14" fill="none" stroke="#a5a5a7" strokeWidth="1.400"><path d="M.7.7h14.600v12.600H.7zM.7 2.500h14.600" /><path d="M3.500 8q4.500-4.500 9 0-4.500 4.500-9 0z" /><circle cx="8" cy="8" r="1" fill="#a5a5a7" /></svg>
              Change View
            </PenButton>
            <svg width="44" height="44" viewBox="0 0 44 44">
              <defs><radialGradient id="av" cx=".5" cy=".55" r=".75"><stop stopColor="#f4f4f4" /><stop offset=".5" stopColor="#ddd" /><stop offset="1" stopColor="#8a8a8a" /></radialGradient></defs>
              <rect width="44" height="44" rx="2" fill="url(#av)" /><path d="M2 44q1-8 4-12 2-3 6-4l10 7 10-7q4 1 6 4 3 4 4 12z" fill="#000" />
              <path d="M22 4.500L35.500 13v10L22 33 8.500 23V13z" fill="#e2e2e2" />
              <path d="M22 7.500l11 7v6L22 28l-11-7.500v-6zM22 7v7M22 21v7M11 14l11 7.500L33 14M11 21l11-7.500L33 21" fill="none" stroke="#000" strokeWidth="3" />
            </svg>
          </PenHeader>
          <Page>
            <Heading>Famous Quote Generator</Heading>
            <Card>
              <Quote><FaQuoteLeft size={20} />Hasta la vista, baby.<FaQuoteRight size={20} /></Quote>
              <Author>- Terminator 2: Judgment Day</Author>
              <CardFooter>
                <Bird size={37} />
                <Tags><Tag>Famous</Tag><Tag>Movie</Tag><Tag>Random</Tag></Tags>
              </CardFooter>
            </Card>
            <Footer>
              by Dylan Sanders
              <FooterGithub size={19} />
              <Pipe $l={14} $r={13} />
              <FaLinkedinIn size={20} />
              <Pipe $l={14} $r={13} />
              <FaFolderOpen size={23} />
            </Footer>
          </Page>
        </Browser>
      </Workspace>
    </Screen>
  );
}
